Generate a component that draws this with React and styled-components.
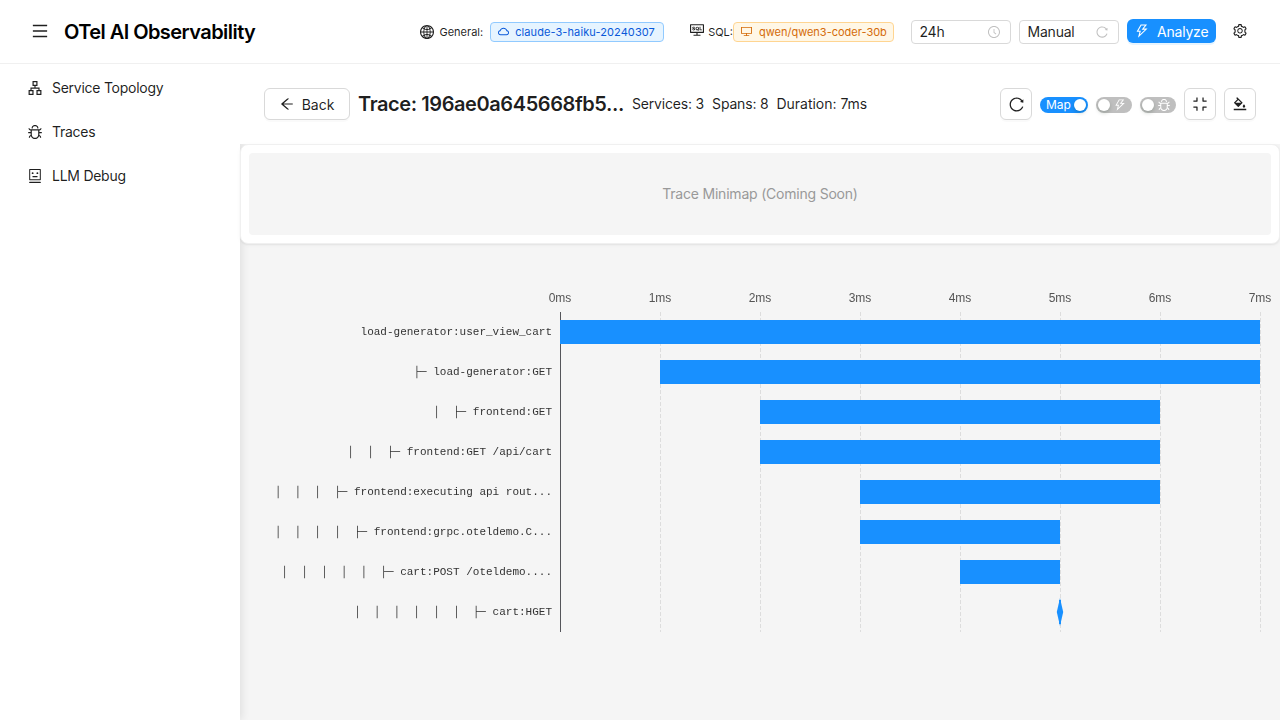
import React from 'react';
import styled, { createGlobalStyle, css } from 'styled-components';
import {
  AiOutlineMenu, AiOutlineApartment, AiOutlineBug, AiOutlineRobot, AiOutlineGlobal,
  AiOutlineConsoleSql, AiOutlineCloud, AiOutlineDesktop, AiOutlineClockCircle,
  AiOutlineReload, AiOutlineThunderbolt, AiOutlineSetting, AiOutlineArrowLeft,
  AiOutlineCompress, AiOutlineBgColors,
} from 'react-icons/ai';

const Global = createGlobalStyle`
  *, *::before, *::after { box-sizing: border-box; }
  body {
    margin: 0;
    font-family: Inter, "Liberation Sans", sans-serif;
    font-size: 14px;
    line-height: 22px;
    letter-spacing: -0.21px;
    color: rgba(0, 0, 0, 0.88);
    background: #f5f5f5;
    overflow: hidden;
  }
  svg { flex: none; display: block; }
`;

// The icon set is drawn with a 64-unit margin that is trimmed here.
const Glyph = ({ of: Icon, size = 14 }) => <Icon size={size} viewBox="64 64 896 896" />;

const Page = styled.div`
  display: flex;
  flex-direction: column;
  height: 100vh;
`;

const TopBar = styled.header`
  flex: none;
  height: 64px;
  display: flex;
  align-items: center;
  justify-content: space-between;
  padding: 0 24px 0 32px;
  background: #fff;
  border-bottom: 1px solid #f0f0f0;
  position: relative;
  z-index: 2;
`;

const Brand = styled.div`
  display: flex;
  align-items: center;
  gap: 16px;
  > svg { margin-top: -1px; }
`;

const AppTitle = styled.h1`
  margin: 0;
  font-size: 20px;
  line-height: 28px;
  font-weight: 600;
  letter-spacing: -0.56px;
  color: #000;
  white-space: nowrap;
`;

const Tools = styled.div`
  display: flex;
  align-items: center;
`;

const ModelGroup = styled.div`
  display: flex;
  align-items: center;
  gap: ${(p) => p.$gap}px;
  margin-right: ${(p) => p.$after}px;
  > svg { margin-top: ${(p) => p.$iconShift || 0}px; }
`;

const ModelLabel = styled.span`
  font-size: 11px;
  line-height: 20px;
  letter-spacing: 0;
  margin-right: ${(p) => p.$after}px;
`;

const tagTones = {
  blue: css`color: #0958d9; background: #e6f4ff; border-color: #91caff;`,
  orange: css`color: #d46b08; background: #fff7e6; border-color: #ffd591;`,
};

const ModelTag = styled.span`
  display: flex;
  align-items: center;
  gap: ${(p) => p.$gap}px;
  width: ${(p) => p.$width}px;
  height: 20px;
  padding: 0 7px;
  border: 1px solid;
  border-radius: 4px;
  font-size: 11px;
  letter-spacing: ${(p) => p.$track}px;
  white-space: nowrap;
  ${(p) => tagTones[p.$tone]}
`;

const SelectBox = styled.div`
  display: flex;
  align-items: center;
  justify-content: space-between;
  width: 100px;
  height: 24px;
  margin: 1px 8px 0 0;
  padding: 0 10px 0 7.5px;
  border: 1px solid #d9d9d9;
  border-radius: 4px;
  background: #fff;
  svg { color: rgba(0, 0, 0, 0.25); }
`;

const AnalyzeButton = styled.button`
  display: flex;
  align-items: center;
  gap: 8px;
  width: 89px;
  height: 24px;
  margin: -1px 8px 0 0;
  padding: 0 8px;
  border: 0;
  border-radius: 6px;
  background: #1890ff;
  box-shadow: 0 2px 0 rgba(5, 145, 255, 0.1);
  color: #fff;
  font: inherit;
  letter-spacing: -0.2px;
  svg { margin-top: -1px; }
  span { margin-top: 2px; }
`;

const PlainIconButton = styled.button`
  display: grid;
  place-items: center;
  width: 32px;
  height: 32px;
  margin-top: -1px;
  padding: 0;
  border: 0;
  background: none;
  color: rgba(0, 0, 0, 0.88);
`;

const Body = styled.div`
  flex: 1;
  display: flex;
  min-height: 0;
`;

const Sidebar = styled.nav`
  flex: none;
  width: 240px;
  display: flex;
  flex-direction: column;
  gap: 4px;
  padding: 4px;
  background: #fff;
  box-shadow: 2px 0 8px rgba(0, 0, 0, 0.09);
`;

const NavItem = styled.a`
  display: flex;
  align-items: center;
  gap: 10px;
  height: 40px;
  padding-left: 24px;
  letter-spacing: -0.26px;
`;

const Main = styled.main`
  flex: 1;
  min-width: 0;
  display: flex;
  flex-direction: column;
`;

const TraceBar = styled.div`
  display: flex;
  align-items: center;
  justify-content: space-between;
  height: 80px;
  padding: 0 24px;
  background: #fff;
  position: relative;
`;

const TraceInfo = styled.div`
  display: flex;
  align-items: center;
  gap: 8px;
  white-space: nowrap;
`;

const OutlineButton = styled.button`
  display: flex;
  align-items: center;
  justify-content: center;
  gap: 8px;
  width: ${(p) => p.$width || 32}px;
  height: 32px;
  padding: 0;
  border: 1px solid #d9d9d9;
  border-radius: 6px;
  background: #fff;
  box-shadow: 0 2px 0 rgba(0, 0, 0, 0.02);
  color: rgba(0, 0, 0, 0.88);
  font: inherit;
  span { margin-top: 2px; }
`;

const TraceTitle = styled.h2`
  width: 266px;
  margin: 0;
  font-size: 20px;
  line-height: 28px;
  font-weight: 600;
  letter-spacing: -0.42px;
`;

const Stat = styled.span`
  letter-spacing: ${(p) => (p.$wide ? '-0.02px' : '-0.18px')};
`;

const TraceActions = styled.div`
  display: flex;
  align-items: center;
  gap: 8px;
`;

const Toggle = styled.span`
  display: flex;
  flex-direction: ${(p) => (p.$on ? 'row' : 'row-reverse')};
  align-items: center;
  justify-content: space-between;
  width: ${(p) => p.$width}px;
  height: 16px;
  margin-top: 1px;
  padding: 0 ${(p) => (p.$on ? '2px 0 6px' : '6px 0 2px')};
  border-radius: 8px;
  background: ${(p) => (p.$on ? '#1890ff' : '#bfbfbf')};
  color: #fff;
  font-size: 12px;
  line-height: 16px;
  letter-spacing: -0.1px;
`;

const Knob = styled.i`
  width: 12px;
  height: 12px;
  border-radius: 50%;
  background: #fff;
  box-shadow: 0 2px 4px rgba(0, 35, 11, 0.2);
`;

const MinimapCard = styled.section`
  height: 100px;
  padding: 8px;
  border: 1px solid #f0f0f0;
  border-radius: 8px;
  background: #fff;
  box-shadow: 0 1px 2px rgba(0, 0, 0, 0.06), 0 1px 6px -1px rgba(0, 0, 0, 0.04);
  position: relative;
`;

const MinimapEmpty = styled.div`
  display: grid;
  place-items: center;
  height: 100%;
  border-radius: 4px;
  background: #f5f5f5;
  color: #999;
`;

const Chart = styled.svg`
  width: 1040px;
  height: 476px;
  letter-spacing: 0;
  will-change: transform;
`;

const AxisText = styled.text`
  font-family: "Liberation Sans", Arial, sans-serif;
  font-size: 12px;
  fill: #555;
  text-anchor: middle;
`;

const SpanText = styled.text`
  font-family: "Courier New", Courier, "Liberation Mono", monospace;
  font-size: 11px;
  fill: #333;
  text-anchor: end;
  white-space: pre;
`;

const spans = [
  { label: 'load-generator:user_view_cart', depth: 0, start: 0, end: 7 },
  { label: 'load-generator:GET', depth: 1, start: 1, end: 7 },
  { label: 'frontend:GET', depth: 2, start: 2, end: 6 },
  { label: 'frontend:GET /api/cart', depth: 3, start: 2, end: 6 },
  { label: 'frontend:executing api rout...', depth: 4, start: 3, end: 6 },
  { label: 'frontend:grpc.oteldemo.C...', depth: 5, start: 3, end: 5 },
  { label: 'cart:POST /oteldemo....', depth: 6, start: 4, end: 5 },
  { label: 'cart:HGET', depth: 7, start: 5, end: 5 },
];

const ORIGIN = 320;
const TOP = 68;
const ROW = 40;
const UNIT = 100;
const ticks = [0, 1, 2, 3, 4, 5, 6, 7];

const treePrefix = (depth) => (depth ? '│\u00a0\u00a0'.repeat(depth - 1) + '├─\u00a0' : '');

function SpanBar({ span, y }) {
  const x = ORIGIN + span.start * UNIT;
  if (span.start === span.end) {
    return (
      <g fill="#1890ff">
        <rect x={x - 1} y={y} width="2" height="24" />
        <path d={`M${x} ${y - 2}l3.2 14l-3.2 14l-3.2-14z`} />
      </g>
    );
  }
  return <rect x={x} y={y} width={(span.end - span.start) * UNIT} height="24" fill="#1890ff" />;
}

function Waterfall() {
  const bottom = TOP + ROW * spans.length;
  return (
    <Chart viewBox="0 0 1040 476">
      {ticks.map((t) => {
        const x = ORIGIN + t * UNIT;
        return (
          <g key={t}>
            <AxisText x={x} y={TOP - 10}>{`${t}ms`}</AxisText>
            {t > 0 && (
              <line x1={x + 0.5} x2={x + 0.5} y1={TOP} y2={bottom} stroke="#ddd" strokeDasharray="4 2" />
            )}
          </g>
        );
      })}
      <line x1={ORIGIN + 0.5} x2={ORIGIN + 0.5} y1={TOP} y2={bottom} stroke="#54555a" />
      {spans.map((s, i) => (
        <g key={s.label}>
          <SpanText x={ORIGIN - 8} y={TOP + i * ROW + 23}>{treePrefix(s.depth) + s.label}</SpanText>
          <SpanBar span={s} y={TOP + i * ROW + 8} />
        </g>
      ))}
    </Chart>
  );
}

export default function App() {
  return (
    <Page>
      <Global />
      <TopBar>
        <Brand>
          <Glyph of={AiOutlineMenu} size={16} />
          <AppTitle>OTel AI Observability</AppTitle>
        </Brand>
        <Tools>
          <ModelGroup $gap={5} $after={26}>
            <Glyph of={AiOutlineGlobal} />
            <ModelLabel $after={2}>General:</ModelLabel>
            <ModelTag $tone="blue" $width={174} $gap={6} $track={0.09}>
              <Glyph of={AiOutlineCloud} size={11} />
              claude-3-haiku-20240307
            </ModelTag>
          </ModelGroup>
          <ModelGroup $gap={4} $after={17} $iconShift={-3}>
            <Glyph of={AiOutlineConsoleSql} />
            <ModelLabel $after={-4}>SQL:</ModelLabel>
            <ModelTag $tone="orange" $width={161} $gap={7} $track={0}>
              <Glyph of={AiOutlineDesktop} size={11} />
              qwen/qwen3-coder-30b
            </ModelTag>
          </ModelGroup>
          <SelectBox>24h<Glyph of={AiOutlineClockCircle} size={12} /></SelectBox>
          <SelectBox>Manual<Glyph of={AiOutlineReload} size={12} /></SelectBox>
          <AnalyzeButton><Glyph of={AiOutlineThunderbolt} /><span>Analyze</span></AnalyzeButton>
          <PlainIconButton aria-label="Settings"><Glyph of={AiOutlineSetting} /></PlainIconButton>
        </Tools>
      </TopBar>
      <Body>
        <Sidebar>
          <NavItem><Glyph of={AiOutlineApartment} />Service Topology</NavItem>
          <NavItem><Glyph of={AiOutlineBug} />Traces</NavItem>
          <NavItem><Glyph of={AiOutlineRobot} />LLM Debug</NavItem>
        </Sidebar>
        <Main>
          <TraceBar>
            <TraceInfo>
              <OutlineButton $width={86}><Glyph of={AiOutlineArrowLeft} /><span>Back</span></OutlineButton>
              <TraceTitle>Trace: 196ae0a645668fb5...</TraceTitle>
              <Stat>Services: 3</Stat>
              <Stat>Spans: 8</Stat>
              <Stat $wide>Duration: 7ms</Stat>
            </TraceInfo>
            <TraceActions>
              <OutlineButton aria-label="Reload"><Glyph of={AiOutlineReload} size={15} /></OutlineButton>
              <Toggle $on $width={48}>Map<Knob /></Toggle>
              <Toggle $width={36}><Glyph of={AiOutlineThunderbolt} size={12} /><Knob /></Toggle>
              <Toggle $width={36}><Glyph of={AiOutlineBug} size={12} /><Knob /></Toggle>
              <OutlineButton aria-label="Compress"><Glyph of={AiOutlineCompress} /></OutlineButton>
              <OutlineButton aria-label="Colors"><Glyph of={AiOutlineBgColors} /></OutlineButton>
            </TraceActions>
          </TraceBar>
          <MinimapCard><MinimapEmpty>Trace Minimap (Coming Soon)</MinimapEmpty></MinimapCard>
          <Waterfall />
        </Main>
      </Body>
    </Page>
  );
}
